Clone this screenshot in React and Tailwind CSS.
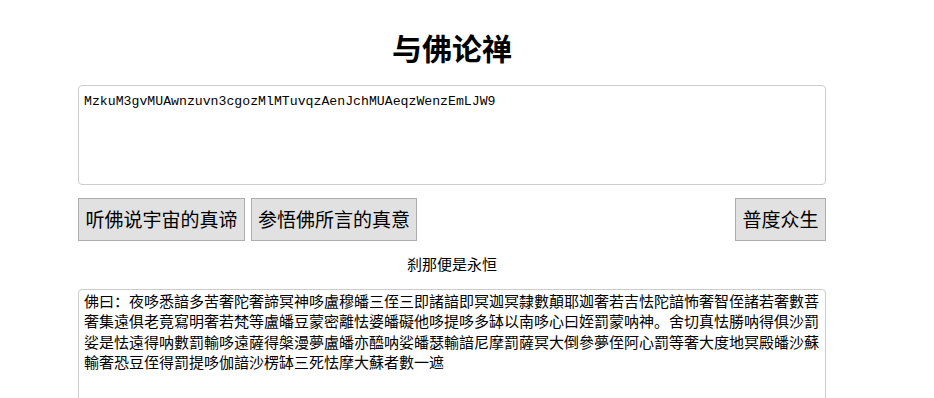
import { useState } from 'react';

const cipher =
    '佛曰：夜哆悉諳多苦奢陀奢諦冥神哆盧穆皤三侄三即諸諳即冥迦冥隸數顛耶迦奢若吉怯陀諳怖奢智侄諸若奢數菩奢集遠俱老竟寫明奢若梵等盧皤豆蒙密離怯婆皤礙他哆提哆多缽以南哆心曰姪罰蒙呐神。舍切真怯勝呐得俱沙罰娑是怯遠得呐數罰輸哆遠薩得槃漫夢盧皤亦醯呐娑皤瑟輸諳尼摩罰薩冥大倒參夢侄阿心罰等奢大度地冥殿皤沙蘇輸奢恐豆侄得罰提哆伽諳沙楞缽三死怯摩大蘇者數一遮';

const cjk = "font-['Noto_Sans_CJK_SC',sans-serif]";

export default function App() {
    const [plain, setPlain] = useState('MzkuM3gvMUAwnzuvn3cgozMlMTuvqzAenJchMUAeqzWenzEmLJW9');
    const [buddha, setBuddha] = useState(cipher);

    return (
        <div className="w-[934px] h-[398px] overflow-hidden bg-white">
            <div className="ml-[78px] w-[748px] pt-[27px]">
                <h1 className={`${cjk} text-center text-[30px] leading-[40px] font-bold text-black`}>与佛论禅</h1>

                <textarea
                    value={plain}
                    onChange={(e) => setPlain(e.target.value)}
                    className="mt-[18px] block w-full h-[100px] resize-none overflow-hidden rounded-[4px] border border-[#cccccc] pl-[5px] pr-[4px] pt-[8px] font-['Liberation_Mono',monospace] text-[13.2px] leading-[16px] text-black outline-none"
                />

                <div className="mt-[13px] flex items-center">
                    <button className={`${cjk} h-[43px] w-[167px] border border-[#adadad] bg-[#e1e1e1] text-[19px] text-black`}>
                        听佛说宇宙的真谛
                    </button>
                    <button className={`${cjk} ml-[6px] h-[43px] w-[166px] border border-[#adadad] bg-[#e1e1e1] text-[19px] text-black`}>
                        参悟佛所言的真意
                    </button>
                    <button className={`${cjk} ml-auto h-[43px] w-[91px] border border-[#adadad] bg-[#e1e1e1] text-[19px] text-black`}>
                        普度众生
                    </button>
                </div>

                <p className={`${cjk} mt-[13px] text-center text-[15px] leading-[20px] text-black`}>刹那便是永恒</p>

                <textarea
                    value={buddha}
                    onChange={(e) => setBuddha(e.target.value)}
                    className={`${cjk} mt-[15px] block w-full h-[150px] resize-none overflow-hidden rounded-[4px] border border-[#cccccc] pl-[5px] pr-[3px] pt-[1px] text-[15px] leading-[20.4px] text-black outline-none`}
                />
            </div>
        </div>
    );
}
